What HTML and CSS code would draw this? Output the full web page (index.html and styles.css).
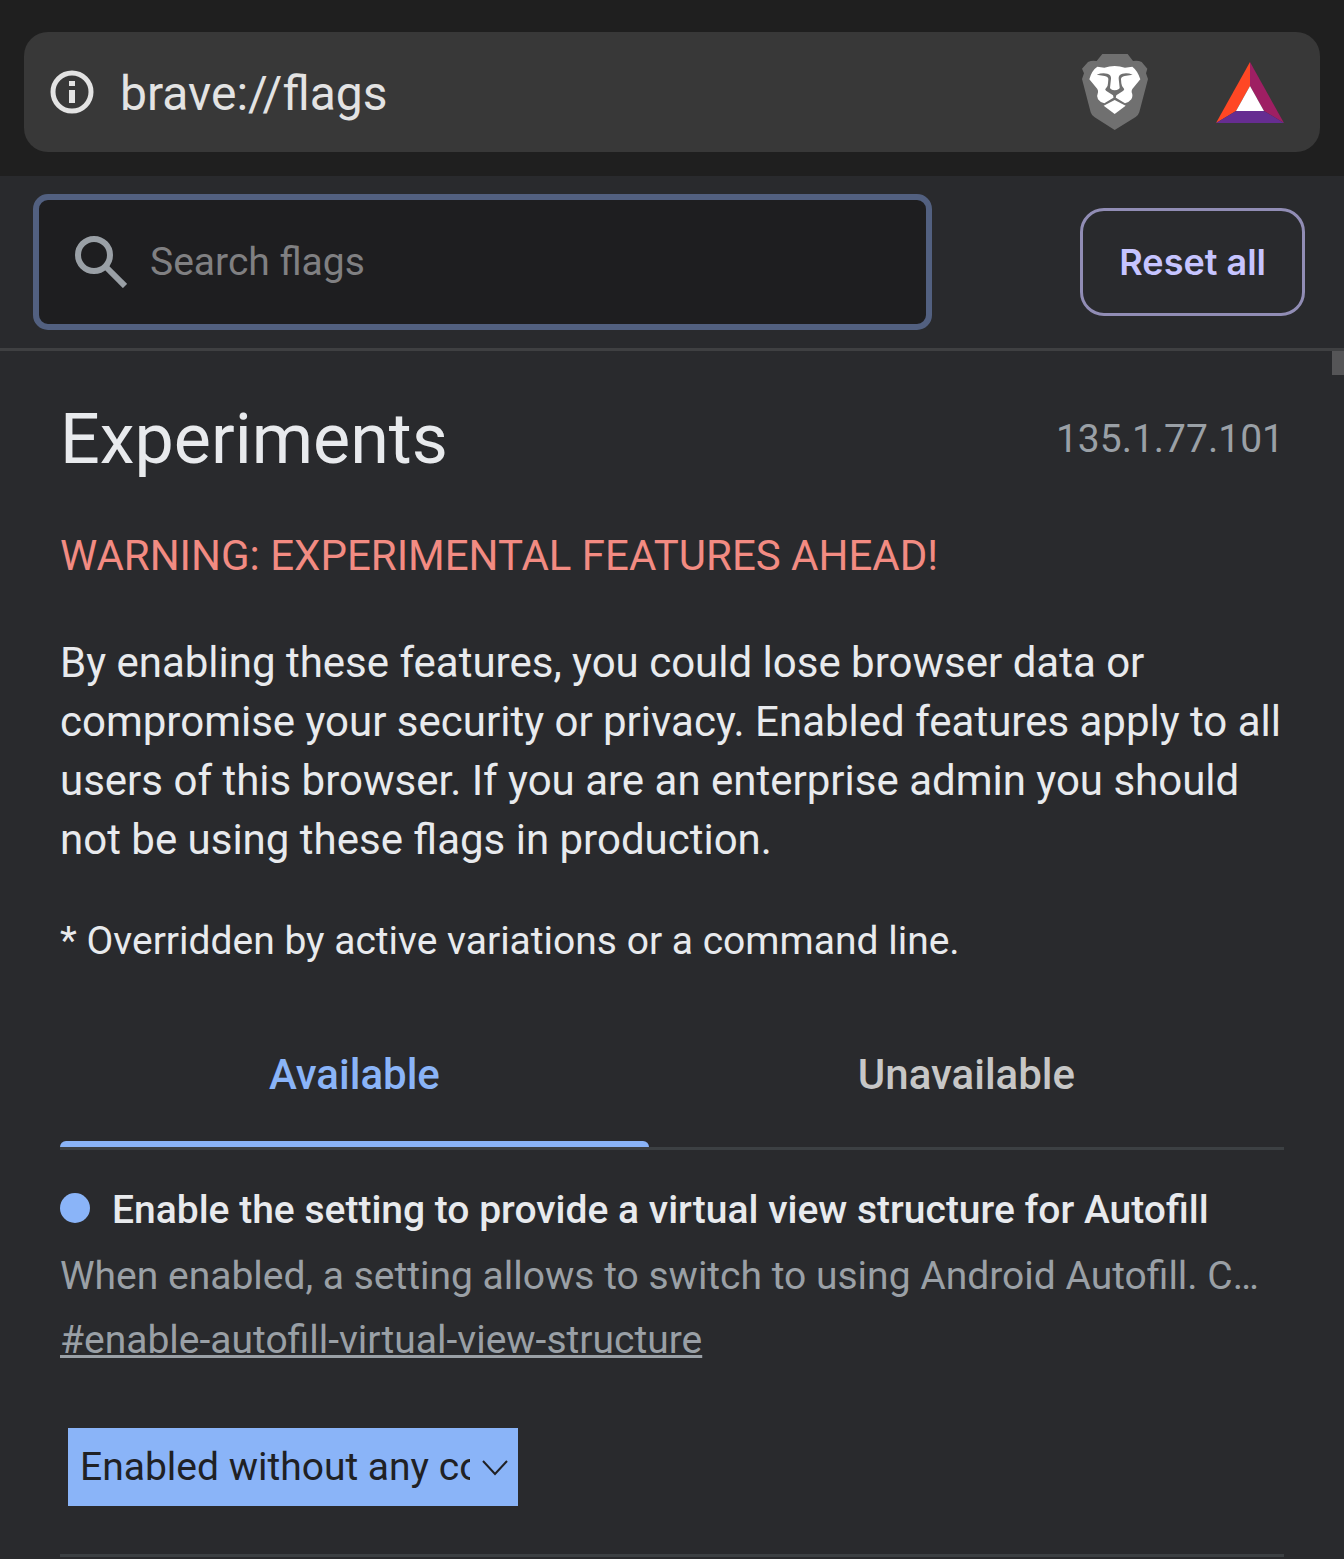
FILE: index.html
```html
<!DOCTYPE html>
<html lang="en">
<head>
  <meta charset="UTF-8" />
  <meta name="viewport" content="width=device-width, initial-scale=1.0"/>
  <title>Experiments</title>
  <link rel="stylesheet" href="styles.css">
</head>
<body>

  <!-- Address bar -->
  <header class="browser-bar">
    <div class="omnibox">
      <svg class="info-icon" viewBox="0 0 44 44" aria-hidden="true">
        <circle cx="22" cy="22" r="19" fill="none" stroke="currentColor" stroke-width="5"/>
        <path fill="currentColor" d="M19 11h6v5h-6zM19 20h6v13h-6z"/>
      </svg>
      <span class="url">brave://flags</span>
      <svg class="brave-icon" viewBox="33 42 204 228" aria-hidden="true">
        <path fill="#707070" d="M97 42H173L189 63Q203 60 215 66L232 86L228 100L234 117L208 216Q205 226 197 231L134 270L74 232Q65 227 62 217L36 117L42 100L36 86L54 66Q66 60 80 63Z"/>
        <path fill="#fff" d="M82 80L103 83Q118 78 134 78Q150 78 165 83L187 80Q203 92 211 118L187 147Q184 152 185 157Q190 168 184 178Q176 188 165 190L134 171L103 190Q91 188 84 178Q79 168 84 157Q85 152 82 147L58 118Q65 91 82 80Z"/>
        <path fill="#707070" d="M80 104Q97 97 112 101Q124 104 123 116L120 143Q120 148 134 151Q149 148 149 143L146 116Q145 104 157 101Q172 97 188 104L164 108Q153 110 153 118L154 130Q155 140 161 145Q165 148 160 152L139 166L137 174H131L129 166L108 152Q103 148 108 145Q114 140 114 130L115 118Q115 110 104 108Z"/>
        <path fill="#fff" d="M101 197L134 180L167 197L134 222Z"/>
      </svg>
      <svg class="bat-icon" viewBox="0 0 68 61" aria-hidden="true">
        <path fill="#ff4724" d="M34 0V24L20 49L0 61Z"/>
        <path fill="#9e1f63" d="M34 0L68 61L48 49L34 24Z"/>
        <path fill="#662d91" d="M0 61L20 49H48L68 61Z"/>
        <path fill="#fff" d="M34 24L48 49H20Z"/>
      </svg>
    </div>
  </header>

  <!-- Search and reset -->
  <div class="toolbar">
    <div class="search">
      <svg class="search-icon" viewBox="0 0 52 52" aria-hidden="true">
        <circle cx="19" cy="19" r="16" fill="none" stroke="currentColor" stroke-width="6"/>
        <path d="M31 31L50 50" fill="none" stroke="currentColor" stroke-width="6"/>
      </svg>
      <input type="text" class="search-input" placeholder="Search flags" aria-label="Search flags">
    </div>
    <button type="button" class="reset">Reset all</button>
  </div>

  <main class="content">
    <div class="scroll-thumb"></div>

    <div class="title-row">
      <h1>Experiments</h1>
      <span class="version">135.1.77.101</span>
    </div>

    <p class="warning">WARNING: EXPERIMENTAL FEATURES AHEAD!</p>
    <p class="blurb">By enabling these features, you could lose browser data or compromise your security or privacy. Enabled features apply to all users of this browser. If you are an enterprise admin you should not be using these flags in production.</p>
    <p class="note">* Overridden by active variations or a command line.</p>

    <div class="tabs" role="tablist">
      <button type="button" class="tab selected" role="tab" aria-selected="true">Available</button>
      <button type="button" class="tab" role="tab" aria-selected="false">Unavailable</button>
    </div>

    <!-- Flag entry -->
    <section class="flag">
      <h2 class="flag-name">Enable the setting to provide a virtual view structure for Autofill</h2>
      <p class="flag-desc">When enabled, a setting allows to switch to using Android Autofill. C…</p>
      <a class="flag-link" href="#enable-autofill-virtual-view-structure">#enable-autofill-virtual-view-structure</a>
      <div class="select-wrap">
        <select class="flag-select" aria-label="Enable the setting to provide a virtual view structure for Autofill">
          <option>Default</option>
          <option>Enabled</option>
          <option selected>Enabled without any compatibility check</option>
          <option>Disabled</option>
        </select>
        <svg class="chevron" viewBox="0 0 26 16" aria-hidden="true">
          <path d="M1 1L13 14L25 1" fill="none" stroke="currentColor" stroke-width="2"/>
        </svg>
      </div>
    </section>
  </main>

</body>
</html>
```

FILE: styles.css
```css
* {
  box-sizing: border-box;
}

body {
  margin: 0;
  font-family: Roboto, "Liberation Sans", sans-serif;
  background: #292a2d;
  color: #e8eaed;
}

h1, h2, p {
  margin: 0;
  font-weight: 400;
}

button, input, select {
  font-family: inherit;
}

.browser-bar {
  padding: 32px 24px 24px;
  background: #1f1f1f;
}

.omnibox {
  display: flex;
  align-items: center;
  height: 120px;
  padding: 0 36px 0 26px;
  border-radius: 24px;
  background: #383838;
  color: #e3e3e3;
}

.info-icon {
  width: 44px;
  height: 44px;
}

.url {
  flex: 1;
  padding: 2px 0 0 26px;
  font-size: 48px;
}

.brave-icon {
  width: 68px;
  height: 76px;
  margin-right: 67px;
}

.bat-icon {
  width: 68px;
  height: 61px;
}

.toolbar {
  display: flex;
  align-items: center;
  gap: 148px;
  padding: 18px 39px 18px 33px;
  border-bottom: 3px solid #3f4042;
}

.search {
  display: flex;
  flex: 1;
  align-items: center;
  height: 136px;
  padding-left: 36px;
  border: 6px solid #526080;
  border-radius: 15px;
  background: #1e1e20;
}

.search-icon {
  width: 52px;
  height: 52px;
  color: #9aa0a6;
}

.search-input {
  flex: 1;
  min-width: 0;
  padding: 0 0 0 23px;
  border: 0;
  outline: 0;
  background: none;
  color: #e8eaed;
  font-size: 39px;
}

.search-input::placeholder {
  color: #808082;
}

.reset {
  height: 108px;
  padding: 0 36px;
  border: 3px solid #918db5;
  border-radius: 24px;
  background: none;
  color: #c6c4ff;
  font-family: Inter, sans-serif;
  font-size: 36px;
  font-weight: 600;
}

.content {
  position: relative;
  padding: 41px 60px 0;
}

.scroll-thumb {
  position: absolute;
  top: 0;
  right: 0;
  width: 12px;
  height: 24px;
  background: #555557;
}

.title-row {
  display: flex;
  align-items: center;
  justify-content: space-between;
}

h1 {
  font-size: 70px;
  line-height: 94px;
}

.version {
  color: #9aa0a6;
  font-size: 39px;
}

.warning {
  padding-top: 41px;
  color: #f28b82;
  font-size: 42px;
  line-height: 58px;
}

.blurb {
  padding-top: 48px;
  font-size: 42px;
  line-height: 59px;
}

.note {
  padding-top: 45px;
  font-size: 39px;
  line-height: 54px;
}

.tabs {
  display: flex;
  margin-top: 42px;
  border-bottom: 3px solid #3c4043;
}

.tab {
  position: relative;
  flex: 1 1 auto;
  height: 137px;
  padding: 0 0 8px;
  border: 0;
  background: none;
  color: #c7c7c7;
  font-size: 42px;
  font-weight: 500;
}

.tab.selected {
  color: #8ab4f8;
}

.tab.selected::after {
  content: "";
  position: absolute;
  left: 0;
  right: 0;
  bottom: 0;
  height: 6px;
  border-radius: 6px 6px 0 0;
  background: #8ab4f8;
}

.flag {
  padding: 32px 0 48px;
  border-bottom: 3px solid #3c4043;
}

.flag-name {
  display: flex;
  align-items: center;
  gap: 22px;
  font-size: 39px;
  font-weight: 500;
  line-height: 56px;
}

.flag-name::before {
  content: "";
  width: 30px;
  height: 30px;
  margin-bottom: 4px;
  border-radius: 50%;
  background: #8ab4f8;
}

.flag-desc {
  overflow: hidden;
  padding-top: 8px;
  color: #9aa0a6;
  font-size: 39px;
  line-height: 60px;
  text-overflow: ellipsis;
  white-space: nowrap;
}

.flag-link {
  display: block;
  width: fit-content;
  padding-top: 4px;
  color: #9aa0a6;
  font-size: 39px;
  line-height: 60px;
}

.select-wrap {
  position: relative;
  width: 450px;
  margin: 58px 0 0 8px;
}

.flag-select {
  display: block;
  width: 100%;
  height: 78px;
  padding: 0 48px 0 12px;
  appearance: none;
  border: 0;
  border-radius: 0;
  background: #8ab4f8;
  color: #202124;
  font-size: 39px;
}

.chevron {
  position: absolute;
  top: 32px;
  right: 10px;
  width: 26px;
  height: 16px;
  color: #202124;
  pointer-events: none;
}
```
